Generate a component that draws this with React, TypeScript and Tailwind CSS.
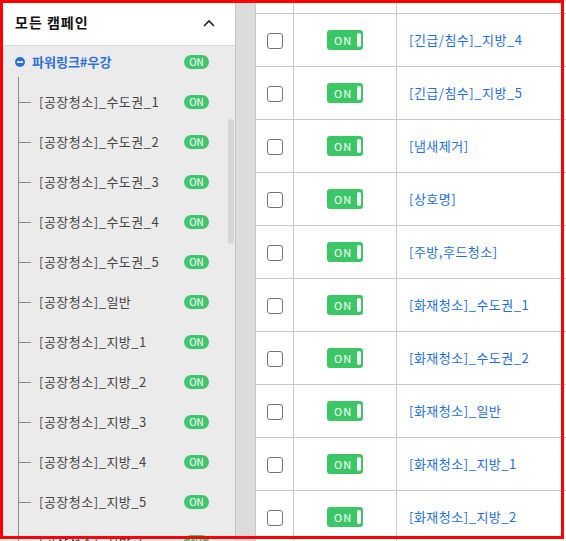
import React from "react";

const font = { fontFamily: '"Noto Sans CJK KR", "Noto Sans", sans-serif' };

const leftItems = [
  "[공장청소]_수도권_1",
  "[공장청소]_수도권_2",
  "[공장청소]_수도권_3",
  "[공장청소]_수도권_4",
  "[공장청소]_수도권_5",
  "[공장청소]_일반",
  "[공장청소]_지방_1",
  "[공장청소]_지방_2",
  "[공장청소]_지방_3",
  "[공장청소]_지방_4",
  "[공장청소]_지방_5",
  "[공장청소]_지방_6",
];

const rows = [
  "",
  "[긴급/침수]_지방_4",
  "[긴급/침수]_지방_5",
  "[냄새제거]",
  "[상호명]",
  "[주방,후드청소]",
  "[화재청소]_수도권_1",
  "[화재청소]_수도권_2",
  "[화재청소]_일반",
  "[화재청소]_지방_1",
  "[화재청소]_지방_2",
];

function Badge() {
  return (
    <span className="flex h-[14px] w-[25px] items-center justify-center rounded-full bg-[#3fc66c] text-[10px] leading-none text-white">
      ON
    </span>
  );
}

function Toggle() {
  return (
    <div className="flex h-[20px] w-[36px] items-center justify-between rounded-[3px] bg-[#3cc767] pl-[7px] pr-[2px]">
      <span className="text-[11px] leading-none tracking-[1px] text-white">ON</span>
      <span className="h-[14px] w-[4px] rounded-[2px] bg-white" />
    </div>
  );
}

export default function App() {
  return (
    <div className="relative flex h-[541px] w-[566px] overflow-hidden bg-white" style={font}>
      {/* Left panel */}
      <div className="flex w-[236px] shrink-0 flex-col border-r border-[#c4c4c4] bg-[#ebebeb]">
        <div className="flex h-[46px] shrink-0 items-center justify-between border-b border-[#d6d6d6] bg-white pl-[15px] pr-[20px]">
          <span className="text-[14px] font-bold tracking-[1px] text-[#111]">모든 캠페인</span>
          <svg width="12" height="8" viewBox="0 0 12 8">
            <path d="M1 7 L6 2 L11 7" fill="none" stroke="#222" strokeWidth="1.6" />
          </svg>
        </div>
        <div className="relative flex-1">
          <div className="flex h-[30px] items-center justify-between pl-[15px] pr-[26px] mt-[1px]">
            <div className="flex items-center gap-[7px]">
              <svg width="10" height="10" viewBox="0 0 10 10">
                <circle cx="5" cy="5" r="5" fill="#2f6fd6" />
                <rect x="2" y="4.2" width="6" height="1.6" fill="#fff" />
              </svg>
              <span className="text-[13px] font-bold text-[#2f6fd6]">파워링크#우강</span>
            </div>
            <Badge />
          </div>
          <div className="relative ml-[18px] border-l border-[#8a8a8a] pt-[5px]">
            {leftItems.map((t) => (
              <div key={t} className="flex h-[40px] items-center pr-[26px]">
                <span className="h-px w-[12px] bg-[#8a8a8a]" />
                <span className="ml-[8px] flex-1 text-[13px] tracking-[0.5px] text-[#444]">{t}</span>
                <Badge />
              </div>
            ))}
          </div>
          <div className="absolute right-[1px] top-[73px] h-[125px] w-[6px] rounded-[3px] bg-[#d6d6d6]" />
        </div>
      </div>

      {/* Gutter */}
      <div className="w-[19px] shrink-0 bg-[#dcdcdc]" />

      {/* Table */}
      <div className="flex-1 border-l border-[#c8c8c8]">
        <div className="mt-[-39px] flex flex-col">
          {rows.map((t, i) => (
            <div key={i} className="flex h-[53px] shrink-0 border-b border-[#c8c8c8]">
              <div className="flex w-[38px] shrink-0 items-center justify-center border-r border-[#c8c8c8]">
                {t && <span className="mt-[1px] h-[16px] w-[16px] rounded-[3px] border border-[#767676] bg-white" />}
              </div>
              <div className="flex w-[103px] shrink-0 items-center justify-center border-r border-[#c8c8c8]">
                {t && <Toggle />}
              </div>
              <div className="flex flex-1 items-center pl-[12px]">
                <span className="whitespace-nowrap text-[13px] tracking-[0.5px] text-[#1e6fd9]">{t}</span>
              </div>
            </div>
          ))}
        </div>
      </div>

      {/* Red outline overlay */}
      <div className="pointer-events-none absolute left-0 top-0 h-[539px] w-[564px] border-[3px] border-[#ff0000]" />
    </div>
  );
}
